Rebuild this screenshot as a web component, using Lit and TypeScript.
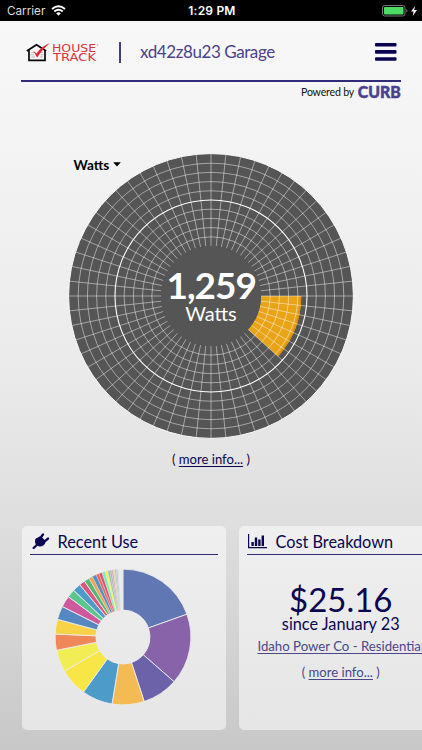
import { LitElement, html, svg, css } from "lit";
import { customElement } from "lit/decorators.js";

const polar = (r: number, deg: number): [number, number] => {
  const a = (deg * Math.PI) / 180;
  return [r * Math.sin(a), -r * Math.cos(a)];
};

const sector = (r0: number, r1: number, a0: number, a1: number): string => {
  const large = a1 - a0 > 180 ? 1 : 0;
  const [x0, y0] = polar(r1, a0);
  const [x1, y1] = polar(r1, a1);
  const [x2, y2] = polar(r0, a1);
  const [x3, y3] = polar(r0, a0);
  return `M${x0} ${y0}A${r1} ${r1} 0 ${large} 1 ${x1} ${y1}L${x2} ${y2}A${r0} ${r0} 0 ${large} 0 ${x3} ${y3}Z`;
};

@customElement("power-gauge")
class PowerGauge extends LitElement {
  static styles = css`
    :host { display: block; width: 286px; height: 286px; }
    svg { display: block; font-family: Lato, sans-serif; }
    .disc { fill: #555; stroke: #fafafa; stroke-width: 1; }
    .hub { fill: #555; }
    .active { fill: #e8a317; }
    .active-edge { fill: none; stroke: #d99308; stroke-width: 1.5; }
    .grid { fill: none; stroke: #fff; stroke-opacity: 0.58; stroke-width: 0.8; }
    .mid { fill: none; stroke: #fff; stroke-width: 1.1; }
    .value { fill: #fff; font-size: 37px; font-weight: 700; text-anchor: middle; }
    .unit { fill: #fff; font-size: 20px; text-anchor: middle; }
  `;
  render() {
    const inner = 50;
    const outer = 142;
    const step = (outer - inner) / 10;
    const rings = [1, 2, 3, 4, 6, 7, 8, 9].map((i) => inner + i * step);
    const spokes = Array.from({ length: 60 }, (_, i) => {
      const [x0, y0] = polar(inner, i * 6);
      const [x1, y1] = polar(outer, i * 6);
      return `M${x0} ${y0}L${x1} ${y1}`;
    }).join("");
    return html`<svg width="286" height="286" viewBox="-143 -143 286 286">
      <circle class="disc" r="142.4"></circle>
      <path class="active" d=${sector(inner, 90.3, 90, 132)}></path>
      <path class="active-edge" d="M89.5 0A89.5 89.5 0 0 1 66.51 59.89"></path>
      ${rings.map((r) => svg`<circle class="grid" r=${r}></circle>`)}
      <path class="grid" d=${spokes}></path>
      <circle class="mid" r="96"></circle>
      <circle class="hub" r="50"></circle>
      <text class="value" x=".7" y="3.2" textLength="90.5">1,259</text>
      <text class="unit" x="0" y="25" textLength="51.5">Watts</text>
    </svg>`;
  }
}

const SLICES: [number, string][] = [
  [70.4, "#6077b4"], [131.2, "#8963aa"], [161.8, "#6c62aa"], [189.3, "#f4bb55"],
  [215.7, "#4c9bc9"], [239.8, "#f8e546"], [258.7, "#f2ec55"], [272.5, "#f0875a"],
  [285.1, "#fad248"], [296.7, "#5588c0"], [306.4, "#cf589f"], [313.4, "#5bc68d"],
  [320.4, "#4c9bc9"], [325.4, "#de5580"], [329.9, "#55b774"], [333.2, "#f0a45d"],
  [336.7, "#4f92bd"], [339.3, "#ed6260"], [342, "#d9536c"], [344.7, "#7fe7bd"],
  [346.9, "#eef25e"], [348.7, "#8fc4a0"], [350.2, "#b5a3bd"], [351.6, "#d3a3a8"],
  [352.9, "#dcd894"], [354.2, "#a9c6bd"], [355.4, "#bfbfd0"], [356.4, "#dad8d8"],
  [360, "#ebebec"],
];

@customElement("usage-donut")
class UsageDonut extends LitElement {
  static styles = css`
    :host { display: block; width: 136px; height: 136px; }
    svg { display: block; }
    .slice { stroke: #ececec; stroke-width: 0.9; }
    .thin { stroke-width: 0.35; }
  `;
  render() {
    return html`<svg width="136" height="136" viewBox="-68 -68 136 136">
      ${SLICES.map(([end, color], i) => {
        const start = i ? SLICES[i - 1][0] : 0;
        return svg`<path class=${end - start < 4 ? "slice thin" : "slice"} d=${sector(27, 67.9, start, end)} fill=${color}></path>`;
      })}
    </svg>`;
  }
}

@customElement("app-root")
class AppRoot extends LitElement {
  static styles = css`
    :host {
      display: flex; flex-direction: column; box-sizing: border-box;
      width: 422px; height: 750px; overflow: hidden;
      font-family: Lato, "Open Sans", sans-serif; color: #0b0650;
      background: linear-gradient(#f8f8f8 20px, #f2f2f2 180px, #ebebeb 360px, #dfdfdf 515px, #c8c8c8 750px);
    }
    svg { display: block; }
    .status {
      display: grid; grid-template-columns: 1fr auto 1fr; align-items: center;
      height: 21px; flex: none; padding: 0 5px 0 7px; box-sizing: border-box;
      background: #000; color: #fff; font: 12px/21px Inter, sans-serif;
    }
    .carrier { display: flex; align-items: center; gap: 6px; color: #ddd; font-size: 11.7px; }
    .carrier span, .clock { padding-top: 1px; line-height: 20px; }
    .clock { font-weight: 600; font-size: 12px; letter-spacing: 0.2px; }
    .power { display: flex; justify-content: flex-end; align-items: center; gap: 3px; }
    .header {
      display: flex; align-items: center; flex: none; height: 59px;
      margin: 0 21px; padding: 3px 4px 0 5px; box-sizing: border-box;
    }
    .rule { height: 1.5px; flex: none; background: #302c78; margin: 0 21px; }
    .divider { width: 1.5px; height: 21px; background: #433c86; margin-left: 20px; }
    .title { flex: 1; margin-left: 19.5px; font-size: 17px; letter-spacing: -0.42px; line-height: 22px; color: #4a418d; white-space: nowrap; }
    .powered {
      display: flex; justify-content: flex-end; align-items: center; gap: 3px;
      height: 20px; flex: none; margin: 0 20px; font-size: 10.6px; letter-spacing: -0.2px; color: #111;
    }
    .brand { fill: #4a418d; stroke: #4a418d; stroke-width: 0.5; letter-spacing: 0; font: 900 17px Lato, sans-serif; }
    .mark { fill: none; stroke: #d8343b; stroke-width: 0.25; }
    .logo-text { fill: #d8343b; font: 9.6px "DejaVu Sans", sans-serif; }
    .gauge { position: relative; display: flex; flex-direction: column; align-items: center; flex: none; padding-top: 51.5px; height: 372.5px; box-sizing: border-box; }
    .select {
      position: absolute; left: 73.5px; top: 54px; display: flex; align-items: center; gap: 3.5px;
      font-size: 13.6px; font-weight: 700; line-height: 18px; color: #000;
    }
    .more { font-size: 13.1px; line-height: 18px; margin-top: 11px; white-space: pre; }
    .link { text-decoration: underline; text-underline-offset: 2px; text-decoration-thickness: 1px; }
    .cards { display: flex; gap: 13.5px; flex: none; padding-left: 22px; margin-top: 52px; }
    .card {
      width: 203.5px; height: 203.5px; flex: none; box-sizing: border-box; padding: 0 8px;
      border-radius: 5px; background: rgba(255, 255, 255, 0.52);
      display: flex; flex-direction: column; align-items: center;
    }
    .card-head {
      display: flex; align-items: center; align-self: stretch; gap: 7.5px; height: 29px; box-sizing: border-box;
      padding: 2px 0 0 1px; border-bottom: 1px solid #302c78; font-size: 16.3px;
    }
    .cost-head { gap: 8.5px; }
    .donut { margin-top: 14px; margin-right: 0.7px; }
    .cost { font-size: 33px; line-height: 35px; margin-top: 27px; }
    .since { font-size: 16.3px; line-height: 18px; margin-top: -2px; white-space: nowrap; }
    .plan { font-size: 13.2px; line-height: 18px; margin-top: 4px; color: #4a478a; white-space: nowrap; }
    .cost-more { margin-top: 8px; color: #4a478a; }
  `;
  render() {
    return html`
      <div class="status">
        <div class="carrier"><span>Carrier</span>
          <svg width="15" height="11" viewBox="0 0 15 11" fill="none" stroke="#fff" stroke-width="2">
            <path d="M1 4Q7.5-1.5 14 4M3.3 6.5Q7.5 3 11.7 6.5"></path>
            <path d="M5.2 8.2Q7.5 6.4 9.8 8.2L7.5 10.7Z" fill="#fff" stroke="none"></path>
          </svg>
        </div>
        <div class="clock">1:29 PM</div>
        <div class="power">
          <svg width="26" height="12" viewBox="0 0 26 12">
            <rect x=".5" y=".5" width="22.5" height="10.5" rx="2.2" fill="none" stroke="#777"></rect>
            <rect x="2" y="2" width="19.5" height="7.5" rx="1" fill="#4cd964"></rect>
            <path d="M24.3 4V7.5Q25.5 7 25.5 5.75T24.3 4Z" fill="#777"></path>
          </svg>
          <svg width="6" height="10" viewBox="0 0 6 10"><path d="M4 0L0 5.6H2.6L1.7 10L6 4H3.2Z" fill="#fff"></path></svg>
        </div>
      </div>
      <div class="header">
        <svg width="73" height="21" viewBox="0 0 73 21">
          <path d="M.8 9L10.5 2.8L20.2 9M3 8V18.4H19V8" fill="none" stroke="#080808" stroke-width="1.7"></path>
          <path d="M5.3 10.5H9M4.5 12.8H8M5.3 15H9M14 10.5H17M14.5 12.8H17.5M14 15H17" stroke="#aaa" stroke-width=".8"></path>
          <path d="M7.3 8.8L10.5 11.5Q15 4.5 24 1Q16 7.5 11.2 15.8Z" fill="#df2832"></path>
          <text class="logo-text" x="26" y="9.6" textLength="44" lengthAdjust="spacingAndGlyphs">HOUSE</text>
          <text class="logo-text" x="27" y="19" textLength="43" lengthAdjust="spacingAndGlyphs">TRACK</text>
          <circle class="mark" cx="71.5" cy="3" r=".6"></circle>
        </svg>
        <div class="divider"></div>
        <div class="title">xd42z8u23 Garage</div>
        <svg width="22" height="20" viewBox="0 0 22 20" fill="#090550">
          <rect y="1" width="21.5" height="3.6" rx="1"></rect><rect y="8.1" width="21.5" height="3.6" rx="1"></rect><rect y="15.2" width="21.5" height="3.6" rx="1"></rect>
        </svg>
      </div>
      <div class="rule"></div>
      <div class="powered"><span>Powered by</span>
        <svg width="45" height="21" viewBox="0 -3 45 21"><text class="brand" x=".8" y="13.9" textLength="43" lengthAdjust="spacingAndGlyphs">CURB</text></svg>
      </div>
      <div class="gauge">
        <power-gauge></power-gauge>
        <div class="select">Watts<svg width="8" height="5" viewBox="0 0 8 5"><path d="M.2.2H7.8L4 4.6Z"></path></svg></div>
        <div class="more">( <span class="link">more info...</span> )</div>
      </div>
      <div class="cards">
        <div class="card">
          <div class="card-head">
            <svg width="19" height="18" viewBox="0 0 19 18" fill="#090550">
              <path d="M4.2 7.4L5.1 6.3L6.2 6.1Q8.2 3.6 10.7 5.1L14 8.4Q15.2 11.6 12.2 13.4Q9.3 15.3 6.4 13.8L3.5 16.8Q2.2 17.5 1.6 16.4T2.4 14.8L4.8 12.4Q3.5 9.9 4.2 7.4Z"></path>
              <path d="M9.3 6.2L12 2.4M13 9.9L17 6.6" fill="none" stroke="#090550" stroke-width="2.4" stroke-linecap="round"></path>
            </svg>
            <span>Recent Use</span>
          </div>
          <usage-donut class="donut"></usage-donut>
        </div>
        <div class="card">
          <div class="card-head cost-head">
            <svg width="19" height="15" viewBox="0 0 19 15" fill="#090550">
              <path d="M0 0H1.2V13H19V14.2H0ZM3.4 8H5.8V12H3.4ZM6.8 3.5H9.2V12H6.8ZM10.2 5.5H12.6V12H10.2ZM13.6 1.5H16V12H13.6Z"></path>
            </svg>
            <span>Cost Breakdown</span>
          </div>
          <div class="cost">$25.16</div>
          <div class="since">since January 23</div>
          <div class="plan link">Idaho Power Co - Residential</div>
          <div class="more cost-more">( <span class="link">more info...</span> )</div>
        </div>
      </div>`;
  }
}
